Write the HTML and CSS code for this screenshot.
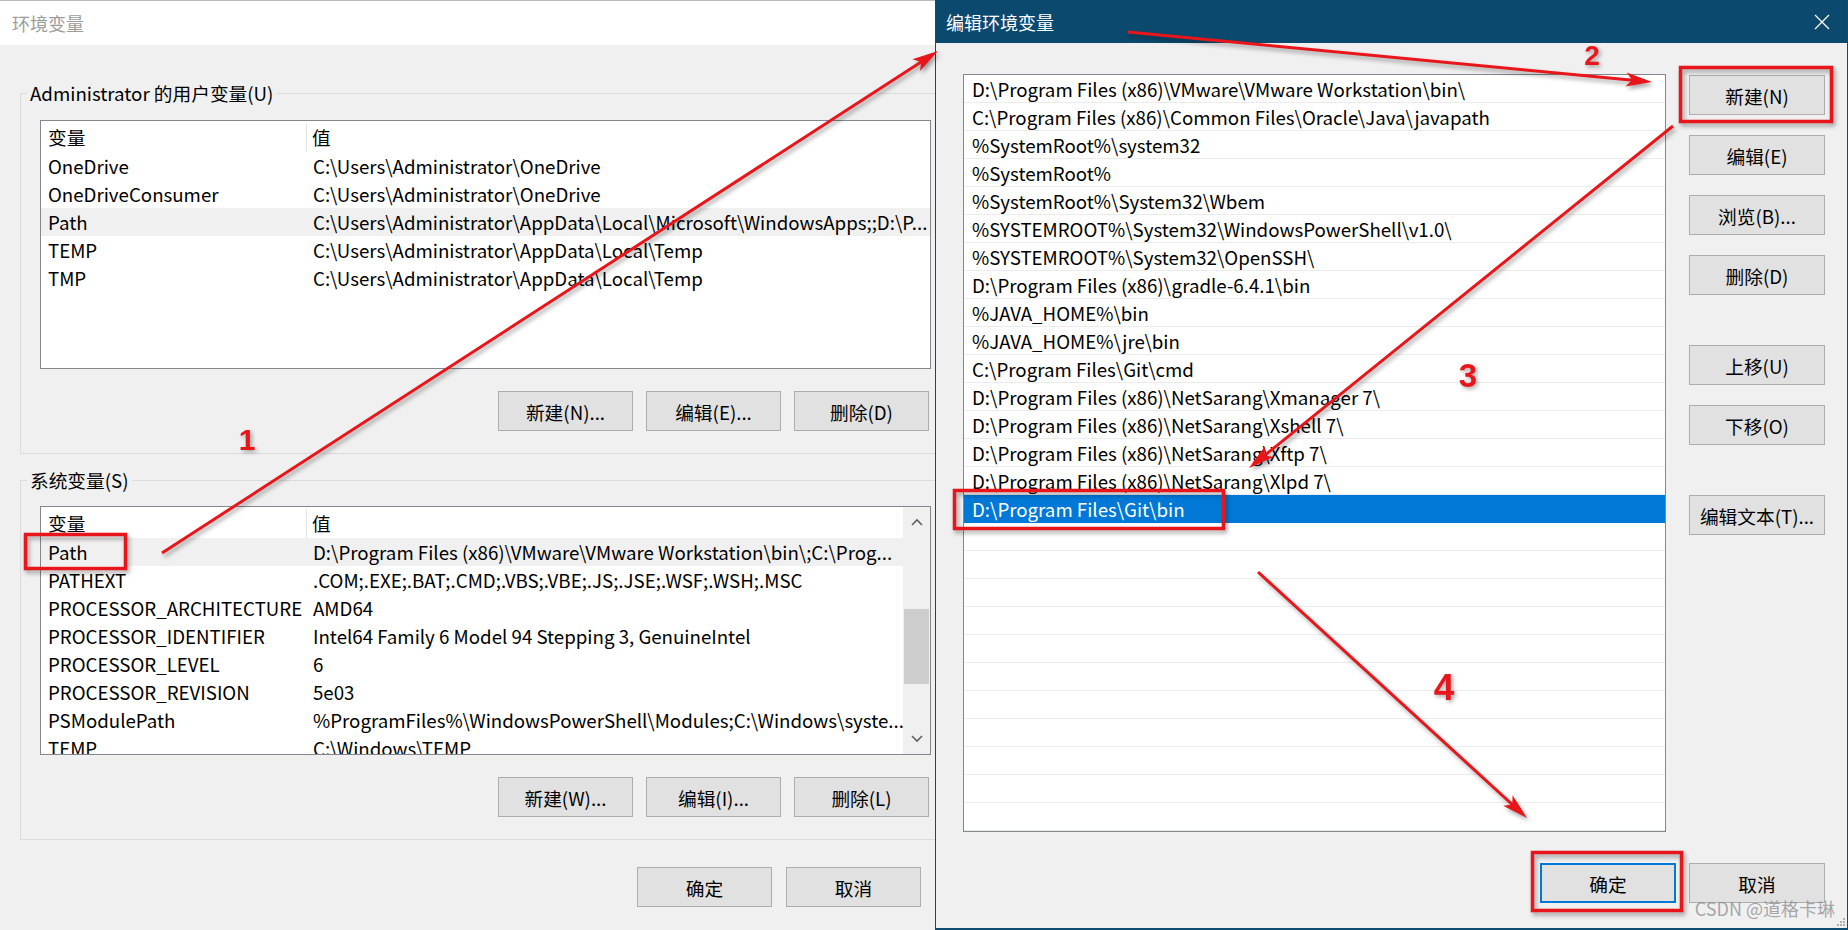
FILE: index.html
```html
<!DOCTYPE html>
<html lang="zh-CN">
<head>
  <meta charset="UTF-8">
  <title>环境变量</title>
  <link rel="stylesheet" href="styles.css">
</head>
<body>
<div class="desktop">

  <section class="env-dialog">
    <div class="env-title">环境变量</div>
    <div class="env-body">

      <fieldset class="group user-group">
        <legend>Administrator 的用户变量(U)</legend>
        <div class="varlist">
          <div class="var-rows">
            <div class="var-row head"><span class="name">变量</span><span class="value">值</span></div>
            <div class="var-row"><span class="name">OneDrive</span><span class="value">C:\Users\Administrator\OneDrive</span></div>
            <div class="var-row"><span class="name">OneDriveConsumer</span><span class="value">C:\Users\Administrator\OneDrive</span></div>
            <div class="var-row hot"><span class="name">Path</span><span class="value">C:\Users\Administrator\AppData\Local\Microsoft\WindowsApps;;D:\P...</span></div>
            <div class="var-row"><span class="name">TEMP</span><span class="value">C:\Users\Administrator\AppData\Local\Temp</span></div>
            <div class="var-row"><span class="name">TMP</span><span class="value">C:\Users\Administrator\AppData\Local\Temp</span></div>
          </div>
        </div>
        <div class="btn-row">
          <button class="btn">新建(N)...</button>
          <button class="btn">编辑(E)...</button>
          <button class="btn">删除(D)</button>
        </div>
      </fieldset>

      <fieldset class="group sys-group">
        <legend>系统变量(S)</legend>
        <div class="varlist">
          <div class="var-rows">
            <div class="var-row head"><span class="name">变量</span><span class="value">值</span></div>
            <div class="var-row hot"><span class="name">Path</span><span class="value">D:\Program Files (x86)\VMware\VMware Workstation\bin\;C:\Prog...</span></div>
            <div class="var-row"><span class="name">PATHEXT</span><span class="value">.COM;.EXE;.BAT;.CMD;.VBS;.VBE;.JS;.JSE;.WSF;.WSH;.MSC</span></div>
            <div class="var-row"><span class="name">PROCESSOR_ARCHITECTURE</span><span class="value">AMD64</span></div>
            <div class="var-row"><span class="name">PROCESSOR_IDENTIFIER</span><span class="value">Intel64 Family 6 Model 94 Stepping 3, GenuineIntel</span></div>
            <div class="var-row"><span class="name">PROCESSOR_LEVEL</span><span class="value">6</span></div>
            <div class="var-row"><span class="name">PROCESSOR_REVISION</span><span class="value">5e03</span></div>
            <div class="var-row"><span class="name">PSModulePath</span><span class="value">%ProgramFiles%\WindowsPowerShell\Modules;C:\Windows\syste...</span></div>
            <div class="var-row"><span class="name">TEMP</span><span class="value">C:\Windows\TEMP</span></div>
          </div>
          <div class="vscroll">
            <div class="arrow"><svg width="12" height="8" viewBox="0 0 12 8"><polyline points="1,7 6,2 11,7" fill="none" stroke="#606060" stroke-width="1.6"/></svg></div>
            <div class="track"><div class="thumb"></div></div>
            <div class="arrow"><svg width="12" height="8" viewBox="0 0 12 8"><polyline points="1,1 6,6 11,1" fill="none" stroke="#606060" stroke-width="1.6"/></svg></div>
          </div>
        </div>
        <div class="btn-row">
          <button class="btn">新建(W)...</button>
          <button class="btn">编辑(I)...</button>
          <button class="btn">删除(L)</button>
        </div>
      </fieldset>

      <div class="btn-row dialog-foot">
        <button class="btn">确定</button>
        <button class="btn">取消</button>
      </div>
    </div>
  </section>

  <section class="edit-dialog">
    <div class="edit-title">
      <span>编辑环境变量</span>
      <svg width="16" height="16" viewBox="0 0 16 16"><path d="M1 1 L15 15 M15 1 L1 15" stroke="#fff" stroke-width="1.3"/></svg>
    </div>
    <div class="edit-body">
      <div class="edit-main">
        <div class="path-list">
          <div class="path-row">D:\Program Files (x86)\VMware\VMware Workstation\bin\</div>
          <div class="path-row">C:\Program Files (x86)\Common Files\Oracle\Java\javapath</div>
          <div class="path-row">%SystemRoot%\system32</div>
          <div class="path-row">%SystemRoot%</div>
          <div class="path-row">%SystemRoot%\System32\Wbem</div>
          <div class="path-row">%SYSTEMROOT%\System32\WindowsPowerShell\v1.0\</div>
          <div class="path-row">%SYSTEMROOT%\System32\OpenSSH\</div>
          <div class="path-row">D:\Program Files (x86)\gradle-6.4.1\bin</div>
          <div class="path-row">%JAVA_HOME%\bin</div>
          <div class="path-row">%JAVA_HOME%\jre\bin</div>
          <div class="path-row">C:\Program Files\Git\cmd</div>
          <div class="path-row">D:\Program Files (x86)\NetSarang\Xmanager 7\</div>
          <div class="path-row">D:\Program Files (x86)\NetSarang\Xshell 7\</div>
          <div class="path-row">D:\Program Files (x86)\NetSarang\Xftp 7\</div>
          <div class="path-row">D:\Program Files (x86)\NetSarang\Xlpd 7\</div>
          <div class="path-row selected">D:\Program Files\Git\bin</div>
        </div>
        <div class="side-btns">
          <button class="btn">新建(N)</button>
          <button class="btn">编辑(E)</button>
          <button class="btn">浏览(B)...</button>
          <button class="btn">删除(D)</button>
          <button class="btn spaced">上移(U)</button>
          <button class="btn">下移(O)</button>
          <button class="btn spaced">编辑文本(T)...</button>
        </div>
      </div>
      <div class="edit-foot">
        <button class="btn default">确定</button>
        <button class="btn">取消</button>
      </div>
    </div>
    <div class="watermark">CSDN @道格卡琳</div>
    <svg class="grip" width="10" height="10" viewBox="0 0 10 10">
      <rect x="7" y="1" width="2" height="2" fill="#b0b0b0"/>
      <rect x="4" y="4" width="2" height="2" fill="#b0b0b0"/>
      <rect x="7" y="4" width="2" height="2" fill="#b0b0b0"/>
      <rect x="1" y="7" width="2" height="2" fill="#b0b0b0"/>
      <rect x="4" y="7" width="2" height="2" fill="#b0b0b0"/>
      <rect x="7" y="7" width="2" height="2" fill="#b0b0b0"/>
    </svg>
  </section>

  <!-- red annotations drawn over both dialogs -->
  <svg class="marks" width="1848" height="930" viewBox="0 0 1848 930">
    <defs>
      <marker id="head" markerUnits="userSpaceOnUse" markerWidth="28" markerHeight="14" refX="20" refY="7" orient="auto" overflow="visible">
        <path d="M0,0 L26,7 L0,14 L6,7 Z" fill="#e8161b"/>
      </marker>
    </defs>
    <g class="ink">
      <line x1="162" y1="553" x2="933" y2="54.3" marker-end="url(#head)"/>
      <line x1="1128" y1="32" x2="1646" y2="81.4" marker-end="url(#head)"/>
      <line x1="1673" y1="126" x2="1253.7" y2="464.2" marker-end="url(#head)"/>
      <line x1="1258" y1="572" x2="1522.6" y2="814" marker-end="url(#head)"/>
      <rect x="25.5" y="534.5" width="100" height="34"/>
      <rect x="1680.5" y="67.5" width="151" height="54"/>
      <rect x="954.5" y="490.5" width="269" height="38"/>
      <rect x="1532.5" y="852.5" width="149" height="58"/>
    </g>
    <g class="nums">
      <text x="247" y="450" font-size="30">1</text>
      <text x="1592" y="65" font-size="28">2</text>
      <text x="1468" y="387" font-size="33">3</text>
      <text x="1444" y="700" font-size="37">4</text>
    </g>
  </svg>

</div>
</body>
</html>
```

FILE: styles.css
```css
body {
  margin: 0;
  font-family: "Noto Sans CJK SC", "Noto Sans", sans-serif;
  font-size: 18.7px;
  color: #000;
  background-color: #f0f0f0;
  overflow: hidden;
}

.desktop {
  position: relative;
  display: flex;
  width: 1848px;
  height: 930px;
}

/* left window: 环境变量 */
.env-dialog {
  width: 935px;
  flex: none;
  display: flex;
  flex-direction: column;
  background-color: #f0f0f0;
  overflow: hidden;
}

.env-title {
  height: 44px;
  border-top: 1px solid #b9b9b9;
  background-color: #fff;
  color: #9c9c9c;
  font-size: 18px;
  display: flex;
  align-items: center;
  padding-left: 12px;
}

.env-body {
  padding: 36px 0 0 20px;
}

.group {
  margin: 0;
  min-width: 0;
  border: 1px solid #dcdcdc;
  border-right: none;
  padding: 15px 4px 22px 19px;
}

.group legend {
  margin-left: -13px;
  padding: 0 3px;
  line-height: 24px;
}

.sys-group {
  margin-top: 14px;
  padding-top: 14px;
}

.varlist {
  height: 249px;
  box-sizing: border-box;
  border: 1px solid #828790;
  background-color: #fff;
  display: flex;
  overflow: hidden;
}

.var-rows {
  flex: 1;
  min-width: 0;
}

.var-row {
  display: flex;
  height: 28px;
  line-height: 28px;
  white-space: nowrap;
}

.var-row .name {
  width: 266px;
  flex: none;
  box-sizing: border-box;
  padding-left: 7px;
}

.var-row .value {
  flex: 1;
  min-width: 0;
  padding-left: 6px;
  overflow: hidden;
}

.var-row.head {
  height: 31px;
  line-height: 31px;
}

.var-row.head .name {
  border-right: 1px solid #e5e5e5;
  margin-top: 2px;
  line-height: 27px;
}

.var-row.head .value {
  padding-left: 5px;
}

.var-row.hot {
  background-color: #f0f0f0;
}

.vscroll {
  width: 27px;
  flex: none;
  display: flex;
  flex-direction: column;
  background-color: #f0f0f0;
}

.vscroll .arrow {
  height: 30px;
  display: flex;
  align-items: center;
  justify-content: center;
}

.vscroll .track {
  flex: 1;
  padding: 72px 1px 0 1px;
}

.vscroll .thumb {
  height: 75px;
  background-color: #cdcdcd;
}

.btn-row {
  display: flex;
  justify-content: flex-end;
  gap: 13px;
  margin-top: 22px;
  padding-right: 2px;
}

.btn {
  width: 135px;
  height: 40px;
  margin: 0;
  padding: 0;
  box-sizing: border-box;
  border: 1px solid #adadad;
  background-color: #e1e1e1;
  font-family: inherit;
  font-size: 18.7px;
  color: #000;
}

.dialog-foot {
  margin-top: 27px;
  gap: 14px;
  padding-right: 14px;
}

/* right window: 编辑环境变量 */
.edit-dialog {
  flex: 1;
  position: relative;
  display: flex;
  flex-direction: column;
  border: 1px solid #0d4d72;
  border-top: none;
  border-bottom-width: 2px;
  background-color: #f0f0f0;
}

.edit-title {
  height: 43px;
  flex: none;
  background-color: #0b4a6e;
  color: #fff;
  font-size: 18px;
  display: flex;
  align-items: center;
  justify-content: space-between;
  padding: 0 17px 0 10px;
}

.edit-body {
  flex: 1;
  display: flex;
  flex-direction: column;
  padding: 31px 22px 0 27px;
}

.edit-main {
  display: flex;
  gap: 23px;
}

.path-list {
  width: 703px;
  height: 758px;
  box-sizing: border-box;
  border: 1px solid #828790;
  background: repeating-linear-gradient(#fff 0, #fff 27px, #ececec 27px, #ececec 28px);
}

.path-row {
  height: 28px;
  line-height: 28px;
  box-sizing: border-box;
  border-bottom: 1px solid #ececec;
  padding-left: 8px;
  white-space: nowrap;
}

.path-row.selected {
  background-color: #0078d7;
  border-bottom-color: #0078d7;
  color: #fff;
}

.side-btns {
  display: flex;
  flex-direction: column;
  gap: 20px;
  padding-top: 1px;
}

.side-btns .btn {
  width: 136px;
}

.side-btns .spaced {
  margin-top: 30px;
}

.edit-foot {
  display: flex;
  justify-content: flex-end;
  gap: 13px;
  margin-top: 31px;
}

.edit-foot .btn {
  width: 136px;
}

.btn.default {
  border: 2px solid #0078d7;
}

.watermark {
  position: absolute;
  right: 12px;
  bottom: 7px;
  font-size: 18px;
  color: rgba(140, 140, 140, 0.75);
}

.grip {
  position: absolute;
  right: 1px;
  bottom: 1px;
}

/* annotations */
.marks {
  position: absolute;
  left: 0;
  top: 0;
  pointer-events: none;
}

.marks .ink {
  filter: drop-shadow(2px 3px 2px rgba(0, 0, 0, 0.35));
}

.marks line {
  stroke: #e8161b;
  stroke-width: 3;
}

.marks rect {
  fill: none;
  stroke: #e8161b;
  stroke-width: 3.5;
}

.marks .nums text {
  font-family: "Liberation Sans", Arial, sans-serif;
  font-weight: bold;
  fill: #e8161b;
  text-anchor: middle;
  filter: drop-shadow(2px 2px 2px rgba(0, 0, 0, 0.35));
}
```
